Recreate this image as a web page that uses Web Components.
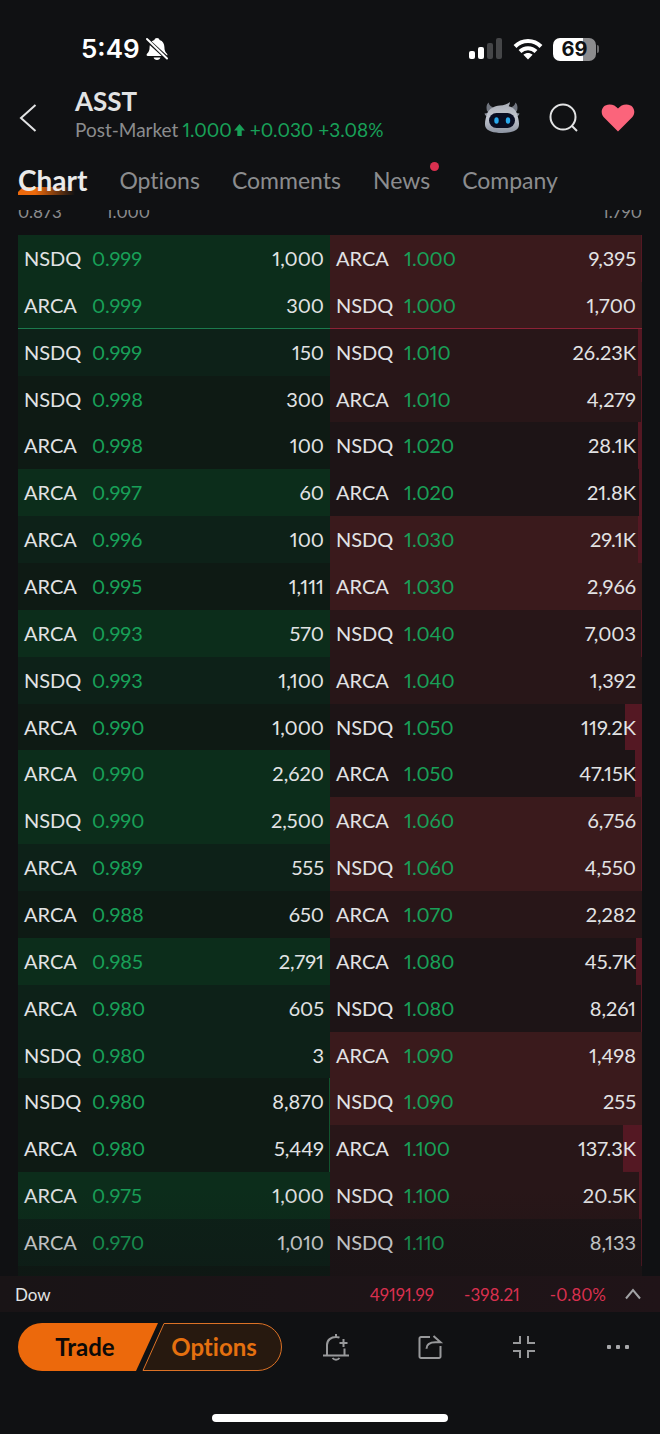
<!DOCTYPE html>
<html lang="en">
<head>
<meta charset="utf-8">
<meta name="viewport" content="width=device-width, initial-scale=1">
<title>ASST</title>
<style>
  html {
    background: #101113;
  }
  body {
    margin: 0;
    min-height: 100vh;
    display: flex;
    flex-direction: column;
    font-family: Lato, "Open Sans", sans-serif;
    font-variant-ligatures: none;
    font-variant-numeric: proportional-nums;
    color: #e2e3e4;
    --muted: #8b8c8e;
    --up: #18a058;
    --down: #d9304f;
    --accent: #ec690c;
    --gutter: 18px;
  }
  order-book {
    flex: 1;
  }
</style>
</head>
<body>
  <status-bar time="5:49" battery="69"></status-bar>
  <stock-header symbol="ASST">
    <span slot="session">Post-Market</span>
    <span slot="price">1.000</span>
    <span slot="change">+0.030 +3.08%</span>
  </stock-header>
  <tab-bar>
    <tab-link href="#chart" active>Chart</tab-link>
    <tab-link href="#options">Options</tab-link>
    <tab-link href="#comments">Comments</tab-link>
    <tab-link href="#news" unread>News</tab-link>
    <tab-link href="#company">Company</tab-link>
  </tab-bar>
  <price-range>
    <span>0.873</span>
    <span>1.000</span>
    <span slot="end">1.790</span>
  </price-range>
  <order-book></order-book>
  <index-ticker name="Dow">
    <span>49191.99</span>
    <span>-398.21</span>
    <span>-0.80%</span>
  </index-ticker>
  <action-bar></action-bar>

<script>
(() => {
  const LEVEL__HIGH = 'high';
  const LEVEL__MID = 'mid';
  const LEVEL__LOW = 'low';

  // [exchange, price, size, level, bar width in px]
  const BIDS = [
    ['NSDQ', '0.999', '1,000', LEVEL__HIGH],
    ['ARCA', '0.999', '300', LEVEL__HIGH],
    ['NSDQ', '0.999', '150', LEVEL__MID],
    ['NSDQ', '0.998', '300', LEVEL__LOW],
    ['ARCA', '0.998', '100', LEVEL__LOW],
    ['ARCA', '0.997', '60', LEVEL__HIGH],
    ['ARCA', '0.996', '100', LEVEL__MID],
    ['ARCA', '0.995', '1,111', LEVEL__LOW],
    ['ARCA', '0.993', '570', LEVEL__HIGH],
    ['NSDQ', '0.993', '1,100', LEVEL__MID],
    ['ARCA', '0.990', '1,000', LEVEL__LOW],
    ['ARCA', '0.990', '2,620', LEVEL__HIGH],
    ['NSDQ', '0.990', '2,500', LEVEL__HIGH],
    ['ARCA', '0.989', '555', LEVEL__MID],
    ['ARCA', '0.988', '650', LEVEL__LOW],
    ['ARCA', '0.985', '2,791', LEVEL__HIGH],
    ['ARCA', '0.980', '605', LEVEL__MID],
    ['NSDQ', '0.980', '3', LEVEL__MID],
    ['NSDQ', '0.980', '8,870', LEVEL__LOW, 1],
    ['ARCA', '0.980', '5,449', LEVEL__LOW, 1],
    ['ARCA', '0.975', '1,000', LEVEL__HIGH],
    ['ARCA', '0.970', '1,010', LEVEL__MID],
  ];
  const ASKS = [
    ['ARCA', '1.000', '9,395', LEVEL__HIGH, 1],
    ['NSDQ', '1.000', '1,700', LEVEL__HIGH],
    ['NSDQ', '1.010', '26.23K', LEVEL__MID, 4],
    ['ARCA', '1.010', '4,279', LEVEL__MID, 1],
    ['NSDQ', '1.020', '28.1K', LEVEL__LOW, 4],
    ['ARCA', '1.020', '21.8K', LEVEL__LOW, 3],
    ['NSDQ', '1.030', '29.1K', LEVEL__HIGH, 4],
    ['ARCA', '1.030', '2,966', LEVEL__HIGH],
    ['NSDQ', '1.040', '7,003', LEVEL__MID, 1],
    ['ARCA', '1.040', '1,392', LEVEL__MID],
    ['NSDQ', '1.050', '119.2K', LEVEL__LOW, 17],
    ['ARCA', '1.050', '47.15K', LEVEL__LOW, 7],
    ['ARCA', '1.060', '6,756', LEVEL__HIGH, 1],
    ['NSDQ', '1.060', '4,550', LEVEL__HIGH, 1],
    ['ARCA', '1.070', '2,282', LEVEL__MID],
    ['ARCA', '1.080', '45.7K', LEVEL__LOW, 6],
    ['NSDQ', '1.080', '8,261', LEVEL__LOW, 1],
    ['ARCA', '1.090', '1,498', LEVEL__HIGH],
    ['NSDQ', '1.090', '255', LEVEL__HIGH],
    ['ARCA', '1.100', '137.3K', LEVEL__MID, 19],
    ['NSDQ', '1.100', '20.5K', LEVEL__MID, 3],
    ['NSDQ', '1.110', '8,133', LEVEL__LOW, 1],
  ];

  class BaseElement extends HTMLElement {
    constructor() {
      super();
      this.attachShadow({ mode: 'open' });
    }

    connectedCallback() {
      this.shadowRoot.innerHTML = this.render();
    }
  }

  class StatusBar extends BaseElement {
    render() {
      return `
        <style>
          :host {
            box-sizing: border-box;
            height: 80px;
            padding: 18px 61px 0 81px;
            display: flex;
            align-items: center;
            font: 600 26px/30px Inter, sans-serif;
            color: #fff;
          }
          .time { margin-right: 5px; }
          .signal { margin-left: auto; }
          .wifi { margin: 0 10px; }
          .battery {
            width: 43px;
            height: 23px;
            border-radius: 7px;
            background: linear-gradient(90deg, #fff 69%, #8c8c8e 69%);
            color: #101113;
            font-size: 20px;
            font-weight: 700;
            line-height: 23px;
            text-align: center;
          }
          .cap {
            width: 2px;
            height: 8px;
            margin-left: 1px;
            border-radius: 0 2px 2px 0;
            background: #6c6c6e;
          }
        </style>
        <span class="time">${this.getAttribute('time')}</span>
        <svg width="24" height="24" viewBox="0 0 24 24" aria-hidden="true">
          <path fill="#fff" d="M12 1c-1.400 0-2.400.8-2.600 2C6 4 4.700 6.700 4.600 10c0 3.500-.8 5-2.600 6.800-.8.9-.4 2.200.8 2.200h18.400c1.200 0 1.600-1.300.8-2.200-1.800-1.800-2.600-3.300-2.600-6.800-.1-3.300-1.400-6-4.800-7-.2-1.200-1.200-2-2.600-2zM8.600 20.500h6.800c-.3 1.600-1.600 2.500-3.400 2.500s-3.100-.9-3.400-2.500z"/>
          <path stroke="#101113" stroke-width="4" d="M1 2l22 20"/>
          <path stroke="#fff" stroke-width="2" stroke-linecap="round" d="M2 2l20 19.500"/>
        </svg>
        <svg class="signal" width="34" height="22" viewBox="0 0 34 22" aria-hidden="true">
          <rect x="0" y="13" width="6" height="8" rx="2" fill="#fff"/>
          <rect x="9" y="9" width="6" height="12" rx="2" fill="#fff"/>
          <rect x="18" y="5" width="6" height="16" rx="2" fill="#454648"/>
          <rect x="27" y="0" width="6" height="21" rx="2" fill="#454648"/>
        </svg>
        <svg class="wifi" width="30" height="22" viewBox="0 0 30 22" aria-hidden="true">
          <g fill="none" stroke="#fff" stroke-width="4">
            <path d="M2 8.500C9.200 1.200 20.800 1.200 28 8.500"/>
            <path d="M7 13.500c4.500-4.400 11.500-4.400 16 0"/>
          </g>
          <path fill="#fff" d="M15 21.500l-4.600-4.700c2.700-2.300 6.500-2.300 9.200 0z"/>
        </svg>
        <span class="battery">${this.getAttribute('battery')}</span>
        <span class="cap"></span>
      `;
    }
  }

  class StockHeader extends BaseElement {
    render() {
      return `
        <style>
          :host {
            box-sizing: border-box;
            height: 76px;
            padding: 0 24px 0 18px;
            display: flex;
            align-items: center;
          }
          button {
            padding: 0;
            border: none;
            background: none;
            display: block;
            cursor: pointer;
          }
          svg { display: block; }
          .quote {
            flex: 1;
            padding-bottom: 6px;
            margin-left: 37px;
          }
          h1 {
            margin: 0;
            font-size: 26px;
            font-weight: 700;
            line-height: 30px;
          }
          p {
            margin: 0;
            display: flex;
            align-items: center;
            font-size: 19px;
            line-height: 28px;
            color: var(--muted);
          }
          .price {
            margin: 0 5px 0 4px;
            display: flex;
            align-items: center;
            gap: 2px;
          }
          .price, .change { color: var(--up); }
          .tools {
            display: flex;
            align-items: center;
            gap: 22px;
          }
        </style>
        <button type="button" aria-label="Back">
          <svg width="20" height="32" viewBox="0 0 20 32" fill="none" stroke="#e2e3e4" stroke-width="2">
            <path d="M17.500 3L3 16l14.500 13"/>
          </svg>
        </button>
        <div class="quote">
          <h1>${this.getAttribute('symbol')}</h1>
          <p>
            <slot name="session"></slot>
            <span class="price">
              <slot name="price"></slot>
              <svg width="11" height="12" viewBox="0 0 11 12" aria-hidden="true">
                <path fill="#18a058" d="M5.500 0L11 6.500H7.700V12H3.300V6.500H0z"/>
              </svg>
            </span>
            <span class="change"><slot name="change"></slot></span>
          </p>
        </div>
        <div class="tools">
          <button type="button" aria-label="Assistant">
            <svg width="44" height="34" viewBox="0 0 44 34">
              <defs>
                <linearGradient id="shell" x1="0" y1="0" x2="0" y2="1">
                  <stop offset="0" stop-color="#a7abb4"/>
                  <stop offset=".5" stop-color="#c3c7d0"/>
                  <stop offset="1" stop-color="#8c93a1"/>
                </linearGradient>
              </defs>
              <path fill="#70757f" d="M5 10C4 6 4.600 3 6.600 1.500c.6 2.600 1.800 4 4.400 4.700L8 12zM35 10c1-4 .4-7-1.600-8.500-.6 2.600-1.800 4-4.400 4.700L32 12z"/>
              <path fill="#8b909b" d="M2.500 12.500l6-1-2 4.500c-2.200-.3-3.500-1.600-4-3.500zM37.500 12.500l-6-1 2 4.500c2.200-.3 3.500-1.600 4-3.500z"/>
              <path fill="url(#shell)" d="M5 13C7 7.500 12 5 18 4.500c4-.3 7-1.300 10-3.500-.2 2-.6 3-1.300 4.200C31.500 6.500 34 9 35 13c1.400 4.500 2.600 9 1.700 12.500C35.600 30 28 32 20 32S4.400 30 3.300 25.500C2.400 22 3.600 17.500 5 13z"/>
              <rect x="7" y="12" width="26" height="15" rx="7.500" fill="#090d22"/>
              <ellipse cx="14.500" cy="19.500" rx="2.200" ry="3.300" fill="#28a9ee"/>
              <ellipse cx="26" cy="19.500" rx="2.200" ry="3.300" fill="#28a9ee"/>
            </svg>
          </button>
          <button type="button" aria-label="Search">
            <svg width="30" height="32" viewBox="0 0 30 32" fill="none" stroke="#e2e3e4" stroke-width="2">
              <circle cx="15" cy="15" r="12.500"/>
              <path d="M23.500 23.500l5.500 5.500"/>
            </svg>
          </button>
          <button type="button" aria-label="Remove from watchlist">
            <svg width="36" height="32" viewBox="0 0 36 32">
              <path fill="#fb647b" d="M18 29.500L3.800 15.300C-.2 11 1.400 2.500 9.600 2.500c3.600 0 6.300 1.600 8.400 4.100 2.100-2.500 4.800-4.100 8.400-4.100 8.200 0 9.800 8.500 5.800 12.800z"/>
            </svg>
          </button>
        </div>
      `;
    }
  }

  class TabBar extends BaseElement {
    render() {
      return `
        <style>
          :host { display: block; }
          nav {
            height: 48px;
            padding: 0 var(--gutter) 6px;
            display: flex;
            align-items: center;
            gap: 32px;
          }
        </style>
        <nav><slot></slot></nav>
      `;
    }
  }

  class TabLink extends BaseElement {
    render() {
      return `
        <style>
          :host {
            position: relative;
            display: block;
            font-size: 23px;
            line-height: 30px;
          }
          a {
            position: relative;
            display: block;
            color: var(--muted);
            text-decoration: none;
          }
          :host([active]) a {
            color: #eaeaea;
            font-size: 28px;
            font-weight: 700;
          }
          :host([active])::before {
            content: "";
            position: absolute;
            left: 0;
            right: 12px;
            bottom: 0;
            height: 8px;
            background: linear-gradient(90deg, var(--accent) 30%, transparent);
            clip-path: polygon(5px 0, 100% 0, 100% 100%, 0 100%, 0 5px);
          }
          :host([unread])::after {
            content: "";
            position: absolute;
            top: -3px;
            right: -9px;
            width: 9px;
            height: 9px;
            border-radius: 50%;
            background: var(--down);
          }
        </style>
        <a href="${this.getAttribute('href')}"><slot></slot></a>
      `;
    }
  }

  // Scrolled partly under the tabs, so only the lower part of the text shows
  class PriceRange extends BaseElement {
    render() {
      return `
        <style>
          :host {
            overflow: hidden;
            height: 25px;
            padding: 0 var(--gutter);
            display: block;
            color: var(--muted);
            font-size: 17px;
          }
          div {
            margin-top: -10px;
            display: flex;
            gap: 44px;
            line-height: 24px;
          }
          .end { margin-left: auto; }
        </style>
        <div>
          <slot></slot>
          <span class="end"><slot name="end"></slot></span>
        </div>
      `;
    }
  }

  class OrderSide extends BaseElement {
    set rows(rows) {
      this._rows = rows;
      if (this.isConnected) this.connectedCallback();
    }

    renderRow([exchange, price, size, level, bar = 0]) {
      return `
        <tr class="${level}" style="--bar: ${bar}px">
          <td class="exchange">${exchange}</td>
          <td class="price">${price}</td>
          <td class="size">${size}</td>
        </tr>
      `;
    }

    render() {
      return `
        <style>
          :host {
            display: flex;
            flex-direction: column;
            --high: #0c2d1b;
            --mid: #0d2118;
            --low: #0e1a14;
            --bar-color: #12542f;
            --line: #1c7a4d;
          }
          :host([side="ask"]) {
            --high: #3a1a1c;
            --mid: #281618;
            --low: #1d1416;
            --bar-color: #541823;
            --line: #8c2236;
          }
          table {
            flex: 1;
            width: 100%;
            border-collapse: collapse;
            table-layout: fixed;
            font-size: 20px;
            line-height: 24px;
          }
          tr {
            background:
              linear-gradient(var(--bar-color), var(--bar-color)) right / var(--bar) 100% no-repeat,
              var(--level);
          }
          .high { --level: var(--high); }
          .mid { --level: var(--mid); }
          .low { --level: var(--low); }
          tr:nth-child(2) td { box-shadow: inset 0 -1px var(--line); }
          td { padding: 0 0 1px; }
          .exchange {
            width: 68px;
            padding-left: 6px;
          }
          .price { color: var(--up); }
          .size {
            padding-right: 6px;
            text-align: right;
          }
          .next {
            height: 10px;
            background: var(--low);
          }
        </style>
        <table aria-label="${this.getAttribute('side')} orders">
          <tbody>${(this._rows || []).map(this.renderRow).join('')}</tbody>
        </table>
        <div class="next"></div>
      `;
    }
  }

  class OrderBook extends BaseElement {
    render() {
      return `
        <style>
          :host {
            position: relative;
            padding: 0 var(--gutter);
            display: grid;
            grid-template-columns: 1fr 1fr;
          }
          :host::after {
            content: "";
            position: absolute;
            left: 0;
            right: 0;
            bottom: 0;
            height: 90px;
            background: linear-gradient(transparent, rgba(16, 17, 19, 0.25));
            pointer-events: none;
          }
        </style>
        <order-side side="bid"></order-side>
        <order-side side="ask"></order-side>
      `;
    }

    connectedCallback() {
      super.connectedCallback();
      this.shadowRoot.querySelector('[side="bid"]').rows = BIDS;
      this.shadowRoot.querySelector('[side="ask"]').rows = ASKS;
    }
  }

  class IndexTicker extends BaseElement {
    render() {
      return `
        <style>
          :host {
            height: 36px;
            padding: 0 17px 0 15px;
            background: linear-gradient(90deg, #191416, #201418);
            display: flex;
            align-items: center;
            font-size: 17px;
          }
          .values {
            margin-left: auto;
            display: flex;
            gap: 30px;
            color: var(--down);
          }
          button {
            padding: 0;
            border: none;
            margin-left: 17px;
            background: none;
            cursor: pointer;
          }
          svg { display: block; }
        </style>
        <span>${this.getAttribute('name')}</span>
        <div class="values"><slot></slot></div>
        <button type="button" aria-label="Expand indices">
          <svg width="20" height="20" viewBox="0 0 20 20" fill="none" stroke="#a2a3a5" stroke-width="2">
            <path d="M3 14.500L10 6l7 8.500"/>
          </svg>
        </button>
      `;
    }
  }

  class SplitButton extends BaseElement {
    render() {
      return `
        <style>
          :host { display: flex; }
          button {
            width: 140px;
            height: 48px;
            padding: 0;
            border: none;
            background: none;
            font: 700 24px/48px Lato, sans-serif;
            font-variant-ligatures: none;
            cursor: pointer;
          }
          .trade {
            padding-right: 6px;
            border-radius: 24px 0 0 24px;
            background: var(--accent);
            color: #0d0a08;
            clip-path: polygon(0 0, 100% 0, calc(100% - 22px) 100%, 0 100%);
          }
          .options {
            position: relative;
            padding-left: 4px;
            margin-left: -16px;
            color: #e4700f;
          }
          svg {
            position: absolute;
            top: 0;
            left: 0;
          }
          span { position: relative; }
        </style>
        <button type="button" class="trade">Trade</button>
        <button type="button" class="options">
          <svg width="140" height="48" viewBox="0 0 140 48" aria-hidden="true">
            <path fill="#27190f" stroke="#dc7226" d="M22 .5H116a23.500 23.500 0 0 1 0 47H1z"/>
          </svg>
          <span>Options</span>
        </button>
      `;
    }
  }

  class ActionBar extends BaseElement {
    render() {
      return `
        <style>
          :host {
            height: 122px;
            display: flex;
            flex-direction: column;
          }
          .row {
            height: 70px;
            padding: 0 28px 0 var(--gutter);
            display: flex;
            align-items: center;
          }
          .icons {
            flex: 1;
            margin-left: 40px;
            display: flex;
            justify-content: space-between;
          }
          .icons button {
            padding: 0;
            border: none;
            background: none;
            cursor: pointer;
          }
          svg {
            display: block;
            fill: none;
            stroke: #98999b;
            stroke-width: 2;
          }
          .home {
            width: 236px;
            height: 8px;
            border-radius: 4px;
            margin: auto auto 12px;
            background: #fff;
          }
        </style>
        <div class="row">
          <split-button></split-button>
          <div class="icons">
            <button type="button" aria-label="Add alert">
              <svg width="28" height="28" viewBox="0 0 28 28">
                <path d="M1 22.500h26M5 22V12c0-5 4-8 9-8 1.400 0 2.600.2 3.500.6M14 1v3M22.500 15.500V22M21.500 6v8M17.500 10h8M10.500 25c1.800 2.300 5.200 2.300 7 0"/>
              </svg>
            </button>
            <button type="button" aria-label="Share">
              <svg width="28" height="28" viewBox="0 0 28 28">
                <path d="M14 4H5a1.500 1.500 0 0 0-1.500 1.500v18A1.500 1.500 0 0 0 5 25h18a1.500 1.500 0 0 0 1.500-1.500V13M17.500 3l7 6.200h-5c-6 0-9 2-9 6.500"/>
              </svg>
            </button>
            <button type="button" aria-label="Collapse">
              <svg width="28" height="28" viewBox="0 0 28 28">
                <path d="M3 10h7V3M25 10h-7V3M3 18h7v7M25 18h-7v7"/>
              </svg>
            </button>
            <button type="button" aria-label="More">
              <svg width="28" height="28" viewBox="0 0 28 28" style="fill: #a8a9ab; stroke: none">
                <rect x="3" y="12" width="4" height="4" rx="1"/>
                <rect x="12" y="12" width="4" height="4" rx="1"/>
                <rect x="21" y="12" width="4" height="4" rx="1"/>
              </svg>
            </button>
          </div>
        </div>
        <div class="home"></div>
      `;
    }
  }

  window.customElements.define('status-bar', StatusBar);
  window.customElements.define('stock-header', StockHeader);
  window.customElements.define('tab-bar', TabBar);
  window.customElements.define('tab-link', TabLink);
  window.customElements.define('price-range', PriceRange);
  window.customElements.define('order-side', OrderSide);
  window.customElements.define('order-book', OrderBook);
  window.customElements.define('index-ticker', IndexTicker);
  window.customElements.define('split-button', SplitButton);
  window.customElements.define('action-bar', ActionBar);
})();
</script>
</body>
</html>
